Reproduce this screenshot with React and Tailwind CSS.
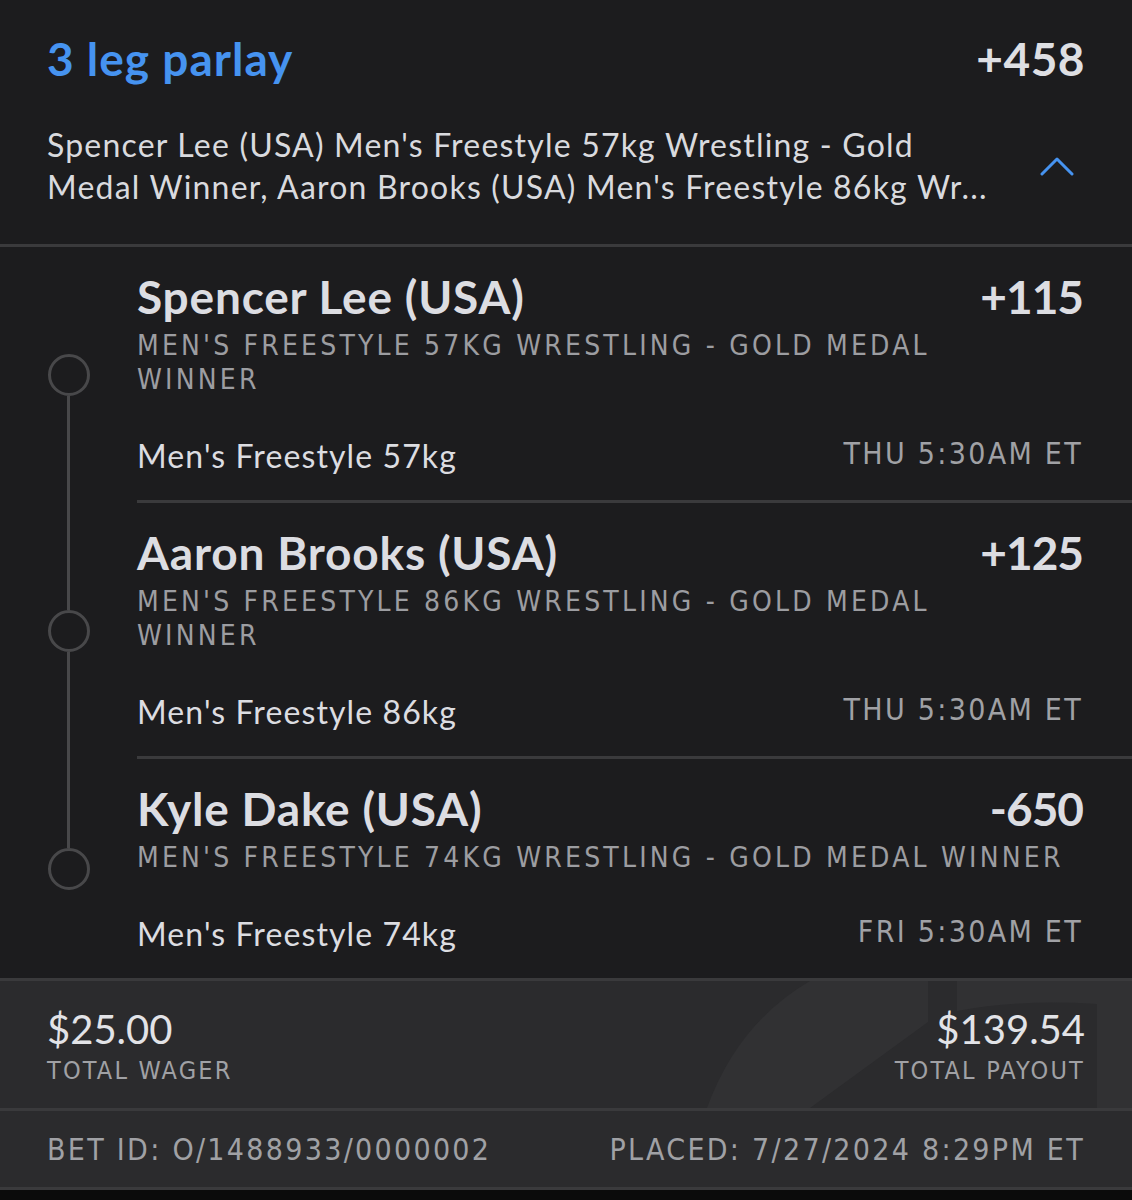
const LEGS = [
  {
    name: 'Spencer Lee (USA)',
    odds: '+115',
    lines: ["MEN'S FREESTYLE 57KG WRESTLING - GOLD MEDAL", 'WINNER'],
    market: "Men's Freestyle 57kg",
    time: 'THU 5:30AM ET',
  },
  {
    name: 'Aaron Brooks (USA)',
    odds: '+125',
    lines: ["MEN'S FREESTYLE 86KG WRESTLING - GOLD MEDAL", 'WINNER'],
    market: "Men's Freestyle 86kg",
    time: 'THU 5:30AM ET',
  },
  {
    name: 'Kyle Dake (USA)',
    odds: '-650',
    lines: ["MEN'S FREESTYLE 74KG WRESTLING - GOLD MEDAL WINNER"],
    market: "Men's Freestyle 74kg",
    time: 'FRI 5:30AM ET',
  },
]

function ChevronUp() {
  return (
    <svg width="34" height="22" viewBox="0 0 34 22" fill="none">
      <path
        d="M2 19 L17 4 L32 19"
        stroke="#4693f0"
        strokeWidth="3"
        strokeLinecap="round"
        strokeLinejoin="round"
      />
    </svg>
  )
}

function Leg({ leg, first, last }) {
  return (
    <div className="flex">
      <div className="flex w-[137px] shrink-0 flex-col items-center">
        <div className={`w-[3px] flex-1 ${first ? '' : 'bg-[#48484a]'}`} />
        <div className="h-[42px] w-[42px] rounded-full border-[3px] border-[#48484a]" />
        <div className={`w-[3px] flex-1 ${last ? '' : 'bg-[#48484a]'}`} />
      </div>
      <div
        className={`min-w-0 flex-1 pr-[49px] pt-[27px] pb-[22px] ${
          last ? '' : 'border-b-[3px] border-[#3a3a3c]'
        }`}
      >
        <div className="flex items-baseline justify-between text-[#dcdde2]">
          <span className="text-[46px] font-bold leading-[46px] tracking-[0.8px]">{leg.name}</span>
          <span className="text-[46px] font-bold leading-[46px] tracking-[-1px]">{leg.odds}</span>
        </div>
        <div className="mt-[9px] font-['Liberation_Sans_Narrow','DejaVu_Sans_Condensed',sans-serif] text-[28px] leading-[34px] tracking-[3.2px] text-[#9c9da1]">
          {leg.lines.map((l) => (
            <div key={l} className="whitespace-nowrap">
              {l}
            </div>
          ))}
        </div>
        <div className="mt-[39px] flex items-baseline justify-between">
          <span className="text-[32px] leading-[40px] tracking-[1.1px] text-[#dcdde1]">{leg.market}</span>
          <span className="relative -top-[4px] font-['Liberation_Sans_Narrow','DejaVu_Sans_Condensed',sans-serif] text-[30px] leading-[40px] tracking-[2.3px] text-[#a0a1a5]">
            {leg.time}
          </span>
        </div>
      </div>
    </div>
  )
}

export default function App() {
  return (
    <div className="min-h-[1200px] w-full bg-[#0b0b0b] font-['Lato',sans-serif]">
      <header className="h-[247px] border-b-[3px] border-[#3a3a3c] bg-[#1c1c1e] px-[47px] pt-[33px]">
        <div className="flex items-baseline justify-between">
          <h1 className="text-[46px] font-bold leading-[52px] tracking-[1px] text-[#4693f0]">3 leg parlay</h1>
          <span className="text-[46px] font-bold leading-[52px] tracking-[0.5px] text-[#dedfe3]">+458</span>
        </div>
        <div className="mt-[39px] flex items-center justify-between">
          <div className="w-[960px] text-[32px] leading-[42px] tracking-[1.2px] text-[#d9dade]">
            <div className="whitespace-nowrap">Spencer Lee (USA) Men's Freestyle 57kg Wrestling - Gold</div>
            <div className="whitespace-nowrap">Medal Winner, Aaron Brooks (USA) Men's Freestyle 86kg Wr...</div>
          </div>
          <div className="mr-[11px]">
            <ChevronUp />
          </div>
        </div>
      </header>

      <section className="bg-[#1c1c1e]">
        {LEGS.map((leg, i) => (
          <Leg key={leg.name} leg={leg} first={i === 0} last={i === LEGS.length - 1} />
        ))}
      </section>

      <footer className="border-t-[3px] border-[#3a3a3c]">
        <div className="relative h-[127px] overflow-hidden bg-[#2b2b2d]">
          <svg className="absolute inset-0" width="1132" height="127" viewBox="0 0 1132 127">
            <path d="M707 127 Q738 42 810 0 L928 0 L928 41 L810 127 Z" fill="#313133" />
            <path d="M957 0 L1132 0 L1132 127 L1097 127 L1097 23 Q1020 18 957 30 Z" fill="#313133" />
          </svg>
          <div className="relative flex justify-between px-[47px] pt-[26px]">
            <div>
              <div className="text-[40px] leading-[44px] text-[#e2e3e7]">$25.00</div>
              <div className="mt-[5px] font-['Liberation_Sans_Narrow','DejaVu_Sans_Condensed',sans-serif] text-[25px] leading-[30px] tracking-[2.2px] text-[#a0a1a5]">
                TOTAL WAGER
              </div>
            </div>
            <div className="text-right">
              <div className="text-[40px] leading-[44px] text-[#e2e3e7]">$139.54</div>
              <div className="mt-[5px] font-['Liberation_Sans_Narrow','DejaVu_Sans_Condensed',sans-serif] text-[25px] leading-[30px] tracking-[2.2px] text-[#a0a1a5]">
                TOTAL PAYOUT
              </div>
            </div>
          </div>
        </div>
        <div className="flex h-[82px] items-center justify-between border-y-[3px] border-[#3a3a3c] bg-[#2b2b2d] px-[47px] font-['Liberation_Sans_Narrow','DejaVu_Sans_Condensed',sans-serif] text-[30px] tracking-[2.3px] text-[#a0a1a5]">
          <span>BET ID: O/1488933/0000002</span>
          <span>PLACED: 7/27/2024 8:29PM ET</span>
        </div>
      </footer>
    </div>
  )
}
